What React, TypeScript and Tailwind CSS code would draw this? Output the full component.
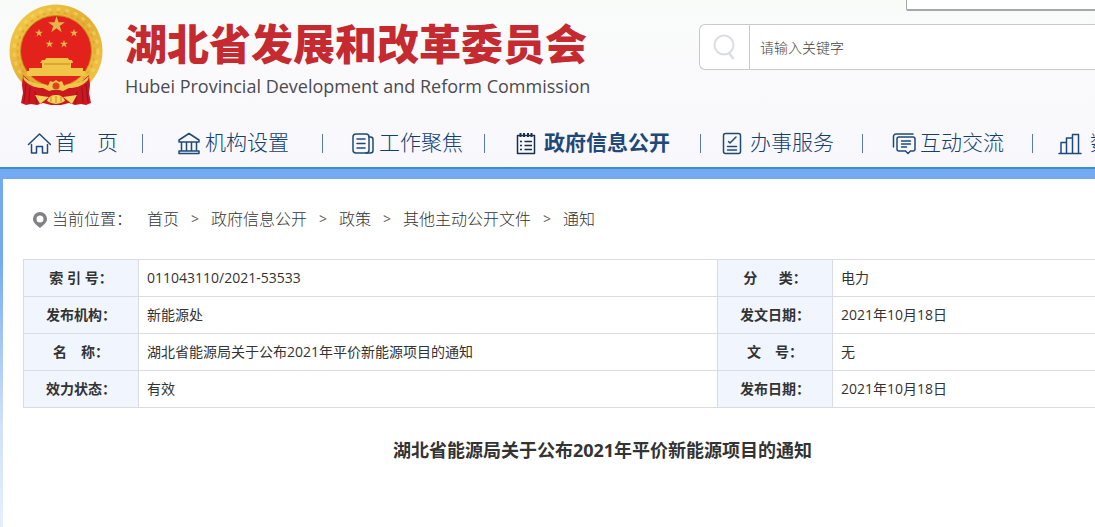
import React from 'react';

const iconProps = {
  fill: 'none',
  stroke: 'currentColor',
  strokeWidth: 1.5,
  strokeLinecap: 'round' as const,
  strokeLinejoin: 'round' as const,
  viewBox: '0 0 24 24',
  className: 'w-6 h-6 shrink-0',
};

const HomeIcon = () => (
  <svg {...iconProps}>
    <path d="M1.500 13.500 12.500 3l11 10.500M4.500 13.500V22h5v-6.500h6V22h5v-8.500" />
  </svg>
);

const OrgIcon = () => (
  <svg {...iconProps}>
    <path d="M2 9 12 2.500 22 9v2H2zM4.500 11v9M9.500 11v9M14.500 11v9M19.500 11v9M2 20h20v2.500H2z" />
  </svg>
);

const NewsIcon = () => (
  <svg {...iconProps}>
    <rect x="2" y="3" width="16" height="19" rx="3" />
    <path d="M6 8h8M6 12.500h8M6 17h8M18 6h1.500a2.500 2.500 0 0 1 2.500 2.500v11a2.500 2.500 0 0 1-2.500 2.500H15" />
  </svg>
);

const NotebookIcon = () => (
  <svg {...iconProps} strokeLinecap="butt" stroke="#16304f">
    <path d="M3.500 4.500h17v18h-17z" />
    <path d="M6.500 2v4M10 2v4M14 2v4M17.500 2v4" strokeWidth="2" />
    <path d="M10.500 10.500H18M10.500 14.500H18M10.500 18.500H18M6 10.500h2M6 14.500h2M6 18.500h2" />
  </svg>
);

const ServiceIcon = () => (
  <svg {...iconProps}>
    <rect x="3.500" y="2.500" width="17" height="20" rx="2" />
    <path d="m8.500 10.500 1.500 1.500 6-6M7.500 15.500h9M7.500 19h9" />
  </svg>
);

const ChatIcon = () => (
  <svg {...iconProps}>
    <path d="M1.500 16V5.500A2.500 2.500 0 0 1 4 3h17" />
    <path d="M7 6h14a2 2 0 0 1 2 2v10a2 2 0 0 1-2 2h-2.500L16 22.500 13.500 20H7a2 2 0 0 1-2-2V8a2 2 0 0 1 2-2z" />
    <path d="M9.500 10h9M9.500 13h9M9.500 16h5" />
  </svg>
);

const DataIcon = () => (
  <svg {...iconProps}>
    <path d="M1 22.500h22M3 22.500v-11h5.500v11M8.500 22.500V7h6v15.500M14.500 22.500v-19h6v19" />
  </svg>
);

const star = 'M0-10 2.300-3.100 9.500-3.100 3.700 1.200 5.900 8.100 0 3.800-5.900 8.100-3.700 1.200-9.500-3.100-2.300-3.100z';

const Emblem = () => (
  <svg viewBox="0 0 94 102" className="w-[94px] h-[102px] shrink-0" role="img" aria-label="国徽">
    <defs>
      <linearGradient id="gold" x1="0" y1="0" x2="1" y2="1">
        <stop offset="0" stopColor="#f5d04a" />
        <stop offset=".5" stopColor="#e3ad35" />
        <stop offset="1" stopColor="#f3ca46" />
      </linearGradient>
    </defs>
    <circle cx="47" cy="47" r="46.500" fill="url(#gold)" />
    <circle cx="47" cy="47" r="42" fill="none" stroke="#f8db6a" strokeWidth="3" strokeDasharray="4 5" opacity=".5" />
    <circle cx="47" cy="47" r="38.500" fill="none" stroke="#d69a2c" strokeWidth="2" strokeDasharray="3 4" opacity=".5" />
    <circle cx="47" cy="47" r="35.500" fill="#e3221c" stroke="#c98a1f" strokeWidth="1" />
    <g fill="#e2b64a">
      <path d={star} transform="translate(47.500 21) scale(.88)" />
      <path d={star} transform="translate(30 29) scale(.42)" />
      <path d={star} transform="translate(65 29) scale(.42)" />
      <path d={star} transform="translate(40.500 40) scale(.42)" />
      <path d={star} transform="translate(55 40) scale(.42)" />
    </g>
    <path d="M37 54h22l1 2h3l1 3h-2v5h12v3h2v5H18v-5h2v-3h13v-5h-2l2-3h3z" fill="#f0c548" />
    <path d="M35 60h26" stroke="#c98a1f" strokeWidth="1" />
    <path d="m14 71 8 7 10 6h30l10-6 8-7 1 10-1 8 2 10-5 2-5-1-6 1-6-2-8 2H42l-8-2-6 2-6-1-5 1-5-2 2-10-1-8z" fill="#cc1620" />
    <path d="m17 80-2 18M21 83l-1 16M26 88l2 12M77 80l2 18M73 83l1 16M68 88l-2 12" stroke="#94141d" strokeWidth="1" fill="none" />
    <path d="M14 72c7 7 14 8 20 8l5 2 2-5 3 1 3-2 3 2 3-1 2 5 5-2c6 0 13-1 20-8l-1 4c-6 7-14 8-19 8l-6 3-4-1H44l-4 1-6-3c-5 0-13-1-19-8z" fill="#efc64b" />
    <path d="m26 91 14 2-9 7zM68 91l-14 2 9 7zM38 97c2-5 5-6 9-6s7 1 9 6l-4 2-5 1-5-1z" fill="#f3d25a" />
    <circle cx="47" cy="82" r="3.500" fill="#d9441f" />
    <path d="M42 93v5M47 92v7M52 93v5" stroke="#c98a1f" strokeWidth="1" />
  </svg>
);

interface NavItem {
  label: string;
  icon: React.FC;
  place: string;
  active?: boolean;
}

const navItems: NavItem[] = [
  { label: '首\u3000页', icon: HomeIcon, place: 'w-[143px] pl-[27px] gap-1' },
  { label: '机构设置', icon: OrgIcon, place: 'w-[180px] pl-[34px] gap-1' },
  { label: '工作聚焦', icon: NewsIcon, place: 'w-[162px] pl-[28px] gap-1' },
  { label: '政府信息公开', icon: NotebookIcon, place: 'w-[216px] pl-[29px] gap-1.5', active: true },
  { label: '办事服务', icon: ServiceIcon, place: 'w-[162px] pl-[19px] gap-1.5' },
  { label: '互动交流', icon: ChatIcon, place: 'w-[170px] pl-[29px] gap-1' },
  { label: '数据发布', icon: DataIcon, place: 'w-[170px] pl-[25px] gap-2' },
];

const crumbs = ['首页', '政府信息公开', '政策', '其他主动公开文件', '通知'];

const rows = [
  ['索 引 号：', '011043110/2021-53533', '分\u3000\u00a0\u00a0类：', '电力'],
  ['发布机构：', '新能源处', '发文日期：', '2021年10月18日'],
  ['名\u3000称：', '湖北省能源局关于公布2021年平价新能源项目的通知', '文\u3000号：', '无'],
  ['效力状态：', '有效', '发布日期：', '2021年10月18日'],
];

const Header = () => (
  <header className="relative bg-linear-to-b from-[#f9fbf9] via-[#faf9fc] to-[#f8f8fc] border-b-2 border-[#3b8fc9]">
    <div className="absolute top-0 right-0 w-[189px] h-[11px] bg-white border-l border-b-2 border-[#a5a7a9] rounded-bl-xs" />
    <div className="flex items-start pl-[9px]">
      <div className="pt-1">
        <Emblem />
      </div>
      <div className="pl-[22px] pt-[18px] whitespace-nowrap">
        <h1 className="text-[42px] leading-[52px] font-black text-[#c52a31]">湖北省发展和改革委员会</h1>
        <p className="text-[18px] leading-[26px] pt-[3px] text-[#4b4b50]">
          Hubei Provincial Development and Reform Commission
        </p>
      </div>
      <form className="ml-auto mt-6 w-[396px] shrink-0 h-[46px] flex bg-white border border-r-0 border-[#c8cbcb] rounded-l-md">
        <button type="button" aria-label="搜索" className="w-[50px] flex items-center justify-center border-r border-[#c8cbcb] text-[#dcdde2]">
          <svg viewBox="0 0 24 28" className="w-6 h-7" fill="none" stroke="currentColor" strokeWidth="2">
            <circle cx="11" cy="12" r="9.500" />
            <path d="m16 20 4.500 6" strokeWidth="2.500" />
          </svg>
        </button>
        <input
          type="text"
          aria-label="请输入关键字"
          placeholder="请输入关键字"
          className="flex-1 min-w-0 px-[10px] text-[14px] font-light outline-none placeholder:text-[#444]"
        />
      </form>
    </div>
    <nav className="flex h-[49px] mt-3 overflow-hidden text-[#1f4a78]">
      {navItems.map(({ label, icon: Icon, place, active }) => (
        <a key={label} href="#" className={`relative flex items-center shrink-0 whitespace-nowrap ${place}`}>
          <Icon />
          <span className={active ? 'text-[21px] font-bold text-[#20497a]' : 'text-[21px] font-light text-[#133f70]'}>{label}</span>
          <span className="absolute right-0 top-4 w-px h-[19px] bg-[#5c7b9b]" />
        </a>
      ))}
    </nav>
  </header>
);

const Breadcrumb = () => (
  <div className="flex items-center pl-[9px] text-[16px] leading-6 font-light text-[#333] whitespace-nowrap">
    <svg viewBox="0 0 16 18" className="w-4 h-[18px] mr-1" fill="#808086" fillRule="evenodd">
      <path d="M8 2a7 7 0 0 1 7 7c0 4-4 6-7 9-3-3-7-5-7-9a7 7 0 0 1 7-7zm0 3.500a3.500 3.500 0 1 0 0 7 3.500 3.500 0 0 0 0-7z" />
    </svg>
    <span className="w-[95px]">当前位置：</span>
    {crumbs.map((crumb, i) => (
      <React.Fragment key={crumb}>
        {i > 0 && <span className="w-8 text-center text-[14px] font-normal text-[#666]">&gt;</span>}
        <a href="#">{crumb}</a>
      </React.Fragment>
    ))}
  </div>
);

const InfoTable = () => (
  <table className="w-full table-fixed border-collapse text-[14px] leading-5 text-[#333]">
    <tbody>
      {rows.map(([k1, v1, k2, v2]) => (
        <tr key={k1} className="h-[37px]">
          <th className="w-[115px] border border-[#d9dce2] bg-[#f0f5fe] font-bold whitespace-pre">{k1}</th>
          <td className="w-[50%] border border-[#d9dce2] px-2">{v1}</td>
          <th className="w-[115px] border border-[#d9dce2] bg-[#f0f5fe] font-bold whitespace-pre">{k2}</th>
          <td className="border border-[#d9dce2] px-2">{v2}</td>
        </tr>
      ))}
    </tbody>
  </table>
);

const App: React.FC = () => {
  return (
    <div className="min-h-screen flex flex-col overflow-hidden font-['Open_Sans','Noto_Sans_CJK_SC',sans-serif]">
      <Header />
      <div className="flex-1 flex flex-col pt-[10px] pl-[3px] bg-linear-to-b from-[#74aaf2] from-25% via-[#cfdffa] via-70% to-[#e6effc]">
        {/* content is wider than the window, the right part runs off the edge */}
        <main className="flex-1 bg-white pl-[20px] pt-7">
          <div className="-mr-[87px]">
            <Breadcrumb />
            <div className="pt-7">
              <InfoTable />
            </div>
            <h2 className="pt-7 text-center text-[18px] leading-7 font-bold text-[#333]">
              湖北省能源局关于公布2021年平价新能源项目的通知
            </h2>
          </div>
        </main>
      </div>
    </div>
  );
};

export default App;
